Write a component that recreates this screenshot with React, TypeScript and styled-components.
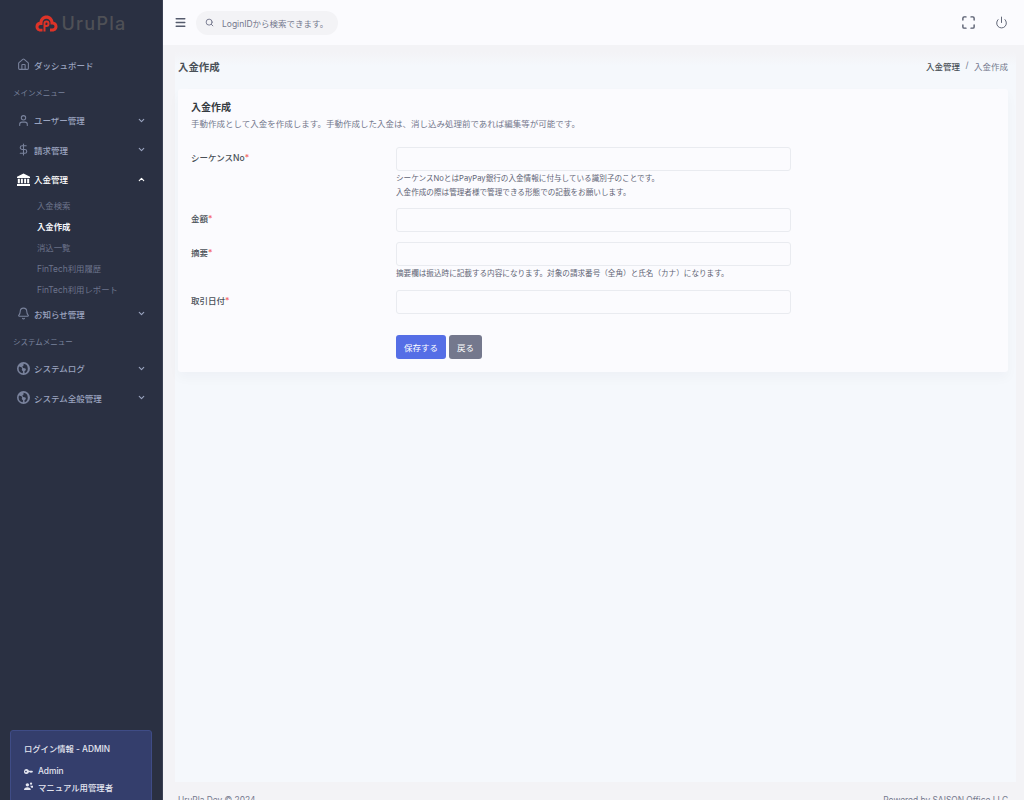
import React from "react";
import styled, { createGlobalStyle } from "styled-components";
import {
  Bell,
  ChevronDown,
  ChevronUp,
  DollarSign,
  Home,
  Maximize,
  Menu,
  Power,
  Search,
  User,
} from "lucide-react";

const latin = `Inter, "Noto Sans CJK JP", sans-serif`;

const GlobalStyle = createGlobalStyle`
  html, body {
    margin: 0;
    height: 800px;
    overflow: hidden;
    background: #f3f3f6;
    font-family: ${latin};
  }
  * { box-sizing: border-box; }
`;

const Shell = styled.div`
  display: grid;
  grid-template-columns: 163px 1fr;
  height: 800px;
  overflow: hidden;
`;

const Sidebar = styled.aside`
  background: #2a3042;
  border-right: 1px solid #3b4154;
  height: 840px;
  display: flex;
  flex-direction: column;
`;

const Brand = styled.div`
  height: 46px;
  display: flex;
  align-items: center;
  justify-content: center;
  gap: 3px;
`;

const BrandName = styled.span`
  font-size: 18px;
  letter-spacing: 1.3px;
  color: #4f5056;
  font-weight: 500;
`;

const Nav = styled.nav`
  display: flex;
  flex-direction: column;
  padding: 4px 0 0;
`;

const NavItem = styled.div<{ $active?: boolean }>`
  height: 29.5px;
  padding: 0 16px 0 17px;
  display: flex;
  align-items: center;
  gap: 4px;
  font-size: 8.5px;
  font-weight: 500;
  color: ${(p) => (p.$active ? "#ffffff" : "#9aa3bf")};
  svg.lead {
    width: 13px;
    height: 13px;
    flex: none;
    color: ${(p) => (p.$active ? "#ffffff" : "#79829c")};
  }
  svg.caret {
    width: 9px;
    height: 9px;
    margin-left: auto;
    stroke-width: 3;
  }
`;

const NavLabel = styled.span`
  flex: 1;
`;

const Section = styled.div<{ $first?: boolean }>`
  height: ${(p) => (p.$first ? 26 : 25)}px;
  padding: 0 13px;
  display: flex;
  align-items: center;
  font-size: 7.5px;
  color: #79829c;
`;

const SubMenu = styled.div`
  display: flex;
  flex-direction: column;
`;

const SubItem = styled.div<{ $active?: boolean }>`
  height: 21px;
  padding-left: 37px;
  display: flex;
  align-items: center;
  font-size: 8.4px;
  font-weight: ${(p) => (p.$active ? 600 : 400)};
  color: ${(p) => (p.$active ? "#f3f4f8" : "#6d748c")};
`;

const LoginBox = styled.div`
  margin: auto 10px 0;
  height: 110px;
  background: #343e6c;
  border: 1px solid #3f4c86;
  border-radius: 3px;
  padding: 12px 13px;
  color: #e4e6f0;
`;

const LoginTitle = styled.div`
  font-size: 8.3px;
  font-weight: 500;
  margin-bottom: 7.5px;
  line-height: 13px;
`;

const LoginRow = styled.div`
  display: flex;
  align-items: center;
  gap: 5px;
  height: 15.5px;
  font-size: 8.4px;
  font-weight: 500;
  svg {
    width: 9px;
    height: 9px;
  }
`;

const Main = styled.div`
  display: flex;
  flex-direction: column;
  min-width: 0;
`;

const TopBar = styled.header`
  height: 45px;
  flex: none;
  background: #fbfbfe;
  display: flex;
  align-items: center;
  padding: 0 16px 0 11px;
`;

const IconButton = styled.button`
  border: 0;
  background: none;
  padding: 0;
  display: flex;
  color: #555b6d;
`;

const SearchBox = styled.div`
  margin-left: 9px;
  width: 142px;
  height: 24px;
  border-radius: 12px;
  background: #f3f3f6;
  display: flex;
  align-items: center;
  gap: 8px;
  padding-left: 9px;
  font-size: 8.5px;
  color: #74788d;
`;

const TopActions = styled.div`
  margin-left: auto;
  display: flex;
  align-items: center;
  gap: 19px;
`;

const Page = styled.main`
  flex: 1;
  display: flex;
  flex-direction: column;
  padding: 7px 8px 0 12px;
  min-height: 0;
`;

const Panel = styled.div`
  height: 730px;
  flex: none;
  background: linear-gradient(#f3f3f6 0, #f5f8fc 14px);
  display: flex;
  flex-direction: column;
`;

const TitleRow = styled.div`
  height: 37px;
  flex: none;
  display: flex;
  align-items: center;
  justify-content: space-between;
  padding: 0 8px 9px 3px;
`;

const PageTitle = styled.h1`
  margin: 0;
  font-size: 10.4px;
  font-weight: 600;
  color: #495057;
`;

const Crumbs = styled.div`
  display: flex;
  gap: 5.5px;
  font-size: 8.5px;
  color: #74788d;
`;

const CrumbParent = styled.span`
  color: #495057;
  font-weight: 500;
`;

const Card = styled.section`
  margin: 0 8px 0 3px;
  background: #fbfbfe;
  border-radius: 3px;
  padding: 12px 14px 14px 13px;
  height: 283px;
  box-shadow: 0 6px 12px rgba(18, 38, 63, 0.03);
`;

const CardTitle = styled.h2`
  margin: 0 0 4px;
  font-size: 10px;
  line-height: 13px;
  font-weight: 600;
  color: #343a40;
`;

const CardDesc = styled.p`
  margin: 0 0 16px;
  font-size: 8.5px;
  line-height: 13px;
  color: #74788d;
`;

const FormRow = styled.div<{ $gap: number }>`
  display: grid;
  grid-template-columns: 205px 395px;
  margin-bottom: ${(p) => p.$gap}px;
`;

const Label = styled.label`
  font-size: 8.5px;
  font-weight: 500;
  line-height: 13px;
  padding-top: 5px;
  color: #495057;
`;

const Required = styled.span`
  color: #f46a6a;
`;

const Field = styled.div`
  display: flex;
  flex-direction: column;
`;

const Input = styled.input`
  height: 24px;
  width: 100%;
  background: #fbfbfe;
  border: 1px solid #e9ebf0;
  border-radius: 3px;
  outline: none;
`;

const HintBlock = styled.div`
  padding-top: 1px;
`;

const Hint = styled.div`
  font-size: 7.6px;
  line-height: 14px;
  color: #5f6475;
`;

const Buttons = styled.div`
  margin: 21px 0 0 205px;
  display: flex;
  gap: 3px;
`;

const Button = styled.button<{ $primary?: boolean }>`
  height: 24px;
  padding: 0 8px;
  border: 0;
  border-radius: 3px;
  font-family: inherit;
  font-size: 8.5px;
  color: #fff;
  background: ${(p) => (p.$primary ? "#556ee6" : "#74788d")};
`;

const Footer = styled.footer`
  flex: none;
  display: flex;
  justify-content: space-between;
  padding: 12px 8px 0 3px;
  font-size: 8.4px;
  line-height: 13px;
  color: #74788d;
`;

const UruLogo = () => (
  <svg width="23" height="17" viewBox="0 0 23 17">
    <path
      d="M5.500 16.500C2.500 16.500.5 14.200.5 11.500 .5 9 2.200 7.200 4.500 6.800 5 3 7.800.5 11.500.5s6.500 2.500 7 6.300c2.300.4 4 2.200 4 4.700 0 2.700-2 5-5 5h-2.500v-3h2.500c1.200 0 2-.8 2-2s-.8-2-2-2h-2V8c0-2.500-1.700-4.300-4-4.300S7.500 5.500 7.500 8v2h-2c-1.200 0-2 .8-2 2s.8 1.800 2 1.800h2v2.700z"
      fill="#dd3328"
    />
    <path
      d="M11.500 5.500a3 3 0 0 1 3 3v.5a3 3 0 0 1-3 3h-1v4.500h-2V8.500a3 3 0 0 1 3-3zm0 2a1 1 0 0 0-1 1V10h1a1 1 0 0 0 1-1v-.5a1 1 0 0 0-1-1z"
      fill="#dd3328"
    />
  </svg>
);

const Bank = () => (
  <svg className="lead" viewBox="0 0 16 16" fill="currentColor">
    <path d="M8 .5 16 4.500V6H0V4.500z" />
    <path d="M1 7h2.500v5.500H1zM4.800 7h2.400v5.500H4.800zM8.800 7h2.400v5.500H8.800zM12.500 7H15v5.500h-2.500z" />
    <path d="M0 13.500h16V16H0z" />
  </svg>
);

const Globe = () => (
  <svg className="lead" viewBox="0 0 16 16" fill="currentColor">
    <path d="M8 0a8 8 0 1 0 0 16A8 8 0 0 0 8 0zM2 8c0-.9.2-1.800.6-2.600l2.900 1.100.9 1.500L5.800 9l.7 1.800.9.500-.2 2.600A6 6 0 0 1 2 8zm7.500 5.800-.3-2.300 1.800-1.800-.6-1.800-2.900-.6-1-1.800 1.400-.8.300-2.400A6 6 0 0 1 9.500 13.800z" />
  </svg>
);

const Key = () => (
  <svg viewBox="0 0 16 16" fill="currentColor">
    <path d="M4.500 3.500a4.500 4.500 0 1 0 4.200 6H11l1 1 1-1 1 1 2-2.500-1.500-1.500H8.700a4.500 4.500 0 0 0-4.200-3zM3.500 6.500a1.500 1.500 0 1 1 0 3 1.500 1.500 0 0 1 0-3z" />
  </svg>
);

const Users = () => (
  <svg viewBox="0 0 16 16" fill="currentColor">
    <circle cx="6" cy="5" r="3" />
    <path d="M0 14c0-3 2.500-4.500 6-4.500s6 1.500 6 4.500z" />
    <circle cx="12.500" cy="3" r="2" />
    <path d="M11 6.500h5V10h-3z" />
  </svg>
);

type MenuEntry = { label: string; icon: React.ReactNode };

const NavRow = ({ label, icon, open, active }: MenuEntry & { open?: boolean; active?: boolean }) => (
  <NavItem $active={active}>
    {icon}
    <NavLabel>{label}</NavLabel>
    {open ? <ChevronUp className="caret" /> : <ChevronDown className="caret" />}
  </NavItem>
);

const subItems = ["入金検索", "入金作成", "消込一覧", "FinTech利用履歴", "FinTech利用レポート"];

export default function App() {
  return (
    <>
      <GlobalStyle />
      <Shell>
        <Sidebar>
          <Brand>
            <UruLogo />
            <BrandName>UruPla</BrandName>
          </Brand>
          <Nav>
            <NavItem>
              <Home className="lead" />
              <NavLabel>ダッシュボード</NavLabel>
            </NavItem>
            <Section $first>メインメニュー</Section>
            <NavRow label="ユーザー管理" icon={<User className="lead" />} />
            <NavRow label="請求管理" icon={<DollarSign className="lead" />} />
            <NavRow label="入金管理" icon={<Bank />} open active />
            <SubMenu>
              {subItems.map((item) => (
                <SubItem key={item} $active={item === "入金作成"}>
                  {item}
                </SubItem>
              ))}
            </SubMenu>
            <NavRow label="お知らせ管理" icon={<Bell className="lead" />} />
            <Section>システムメニュー</Section>
            <NavRow label="システムログ" icon={<Globe />} />
            <NavRow label="システム全般管理" icon={<Globe />} />
          </Nav>
          <LoginBox>
            <LoginTitle>ログイン情報 - ADMIN</LoginTitle>
            <LoginRow>
              <Key />
              Admin
            </LoginRow>
            <LoginRow>
              <Users />
              マニュアル用管理者
            </LoginRow>
          </LoginBox>
        </Sidebar>
        <Main>
          <TopBar>
            <IconButton>
              <Menu size={13} strokeWidth={2.5} />
            </IconButton>
            <SearchBox>
              <Search size={9} strokeWidth={2.5} />
              LoginIDから検索できます。
            </SearchBox>
            <TopActions>
              <IconButton>
                <Maximize size={15} strokeWidth={2.2} />
              </IconButton>
              <IconButton>
                <Power size={13} strokeWidth={1.7} />
              </IconButton>
            </TopActions>
          </TopBar>
          <Page>
            <Panel>
              <TitleRow>
                <PageTitle>入金作成</PageTitle>
                <Crumbs>
                  <CrumbParent>入金管理</CrumbParent>
                  <span>/</span>
                  <span>入金作成</span>
                </Crumbs>
              </TitleRow>
              <Card>
                <CardTitle>入金作成</CardTitle>
                <CardDesc>
                  手動作成として入金を作成します。手動作成した入金は、消し込み処理前であれば編集等が可能です。
                </CardDesc>
                <FormRow $gap={8}>
                  <Label>
                    シーケンスNo<Required>*</Required>
                  </Label>
                  <Field>
                    <Input />
                    <HintBlock>
                      <Hint>シーケンスNoとはPayPay銀行の入金情報に付与している識別子のことです。</Hint>
                      <Hint>入金作成の際は管理者様で管理できる形態での記載をお願いします。</Hint>
                    </HintBlock>
                  </Field>
                </FormRow>
                <FormRow $gap={10}>
                  <Label>
                    金額<Required>*</Required>
                  </Label>
                  <Field>
                    <Input />
                  </Field>
                </FormRow>
                <FormRow $gap={9}>
                  <Label>
                    摘要<Required>*</Required>
                  </Label>
                  <Field>
                    <Input />
                    <HintBlock>
                      <Hint>摘要欄は振込時に記載する内容になります。対象の請求番号（全角）と氏名（カナ）になります。</Hint>
                    </HintBlock>
                  </Field>
                </FormRow>
                <FormRow $gap={0}>
                  <Label>
                    取引日付<Required>*</Required>
                  </Label>
                  <Field>
                    <Input />
                  </Field>
                </FormRow>
                <Buttons>
                  <Button $primary>保存する</Button>
                  <Button>戻る</Button>
                </Buttons>
              </Card>
            </Panel>
            <Footer>
              <span>UruPla Dev © 2024</span>
              <span>Powered by SAISON Office LLC</span>
            </Footer>
          </Page>
        </Main>
      </Shell>
    </>
  );
}
